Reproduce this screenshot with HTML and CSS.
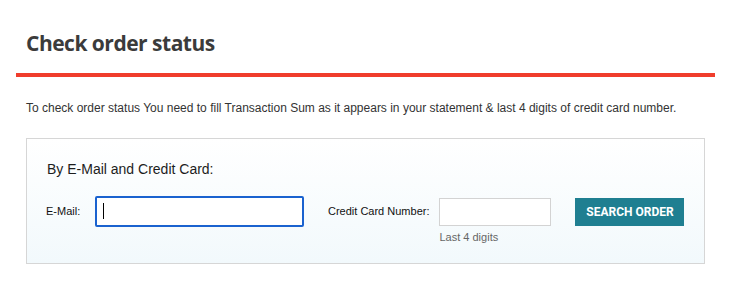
FILE: index.html
```html
<!DOCTYPE html>
<html lang="en">
<head>
    <meta charset="UTF-8">
    <meta name="viewport" content="width=device-width, initial-scale=1.0">
    <title>Check order status</title>
    <link rel="stylesheet" href="styles.css">
</head>
<body>
    <div class="page">
        <div class="page-header">
            <h1>Check order status</h1>
        </div>

        <div class="page-content">
            <p class="intro">To check order status You need to fill Transaction Sum as it appears in your statement &amp; last 4 digits of credit card number.</p>

            <form class="search-box" onsubmit="return false;">
                <h2>By E-Mail and Credit Card:</h2>

                <div class="search-row">
                    <label class="field-label" for="email">E-Mail:</label>
                    <span class="input-wrap">
                        <input type="text" id="email" class="text-input email-input focused">
                        <span class="caret"></span>
                    </span>

                    <label class="field-label card-label" for="card">Credit Card Number:</label>
                    <div class="card-field">
                        <input type="text" id="card" class="text-input card-input">
                        <span class="hint">Last 4 digits</span>
                    </div>

                    <button class="search-button" type="submit">SEARCH ORDER</button>
                </div>
            </form>
        </div>
    </div>
</body>
</html>
```

FILE: styles.css
```css
* {
    margin: 0;
    padding: 0;
    box-sizing: border-box;
}

body {
    font-family: "Liberation Sans", Arial, sans-serif;
    background: #fff;
    color: #222;
}

.page {
    padding: 0 26px 0 16px;
}

/* header with red rule */
.page-header {
    border-bottom: 4px solid #f03d2c;
    padding: 30px 10px 17px;
}

.page-header h1 {
    font-family: "Open Sans", "Noto Sans", sans-serif;
    font-size: 21px;
    font-weight: 700;
    line-height: 26px;
    color: #3b3b3b;
    letter-spacing: -0.5px;
}

.page-content {
    padding: 0 10px;
}

.intro {
    font-size: 12px;
    line-height: 14px;
    color: #333;
    margin-top: 24px;
}

.search-box {
    margin-top: 23px;
    border: 1px solid #d6d6d6;
    background: linear-gradient(180deg, #ffffff 0%, #f2f9fc 100%);
    padding: 21px 20px 19px 19px;
}

.search-box h2 {
    font-size: 14px;
    font-weight: 400;
    line-height: 18px;
    color: #1d1d1d;
    padding-left: 1px;
}

.search-row {
    display: flex;
    align-items: flex-start;
    margin-top: 18px;
}

.search-row > * {
    flex-shrink: 0;
}

.field-label {
    font-size: 11px;
    line-height: 31px;
    color: #111;
    width: 49px;
    white-space: nowrap;
}

.card-label {
    width: auto;
    margin-left: 24px;
    margin-right: 10px;
}

.input-wrap {
    position: relative;
    display: block;
}

.text-input {
    display: block;
    border: 1px solid #d3d3d3;
    background: #fff;
    height: 28px;
    outline: none;
    font: inherit;
}

.email-input {
    width: 209px;
    height: 31px;
}

.email-input.focused {
    border: 2px solid #1a62cf;
    border-radius: 2px;
}

.caret {
    position: absolute;
    left: 8px;
    top: 7px;
    width: 1px;
    height: 16px;
    background: #000;
}

.card-field {
    display: flex;
    flex-direction: column;
    margin-top: 2px;
}

.card-input {
    width: 112px;
}

.hint {
    font-size: 11px;
    line-height: 13px;
    color: #666;
    margin-top: 5px;
}

.search-button {
    margin-left: 24px;
    margin-top: 2px;
    width: 109px;
    height: 28px;
    border: none;
    background: #1f7f91;
    color: #fff;
    font-family: Roboto, "Liberation Sans", sans-serif;
    font-size: 12px;
    font-weight: 700;
    cursor: pointer;
}
```
